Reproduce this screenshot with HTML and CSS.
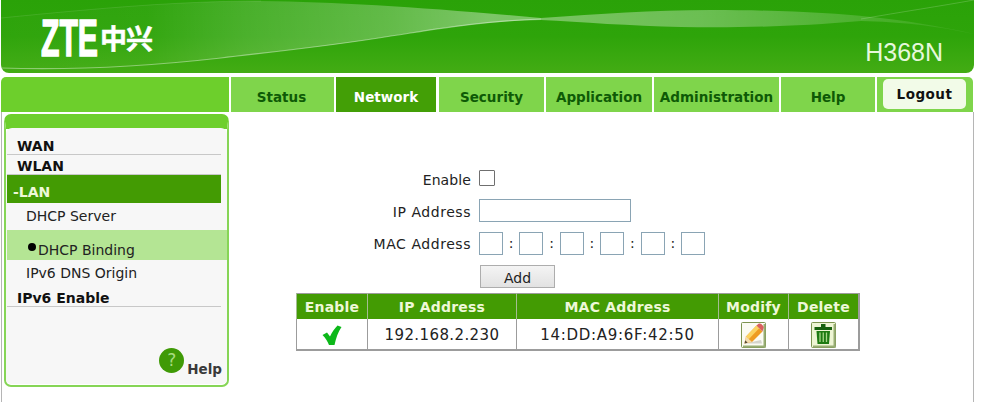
FILE: index.html
```html
<!DOCTYPE html>
<html lang="en">
<head>
    <meta charset="UTF-8">
    <title>H368N</title>
    <link rel="stylesheet" href="styles.css">
</head>
<body>
    <div class="page">
        <div class="header">
            <svg class="waves" viewBox="0 0 973 73" preserveAspectRatio="none">
                <defs>
                    <linearGradient id="sheen" x1="0" x2="973" y1="0" y2="0" gradientUnits="userSpaceOnUse">
                        <stop offset="0" stop-color="#fff" stop-opacity="0.01"/>
                        <stop offset="0.15" stop-color="#fff" stop-opacity="0.03"/>
                        <stop offset="0.25" stop-color="#fff" stop-opacity="0.14"/>
                        <stop offset="0.4" stop-color="#fff" stop-opacity="0.26"/>
                        <stop offset="0.5" stop-color="#fff" stop-opacity="0.38"/>
                        <stop offset="0.72" stop-color="#fff" stop-opacity="0.3"/>
                        <stop offset="1" stop-color="#fff" stop-opacity="0.05"/>
                    </linearGradient>
                </defs>
                <path d="M0 18 C100 8 180 1 260 1 C340 2 430 8 540 18 C600 14 650 10 710 10 C780 10 830 13 870 17 C900 20 940 26 973 34 C930 25 900 22 860 21 C790 27 730 28 680 27 C630 26 580 22 540 20 C480 21 430 30 390 36 C330 46 270 52 220 58 C140 67 60 69 0 68 Z" fill="url(#sheen)"/>
                <path d="M0 68 C60 70 140 67 220 58 C270 52 330 46 390 36 C430 30 480 21 540 19" fill="none" stroke="#fff" stroke-opacity="0.4" stroke-width="1.2"/>
                <path d="M0 18 C100 8 180 1 260 1" fill="none" stroke="#fff" stroke-opacity="0.1" stroke-width="1"/>
                <path d="M860 19 C900 12 940 6 973 0" fill="none" stroke="#fff" stroke-opacity="0.18" stroke-width="1"/>
            </svg>
            <div class="logo"><span class="logo-zte">ZTE</span><span class="logo-cn">中兴</span></div>
            <div class="model">H368N</div>
        </div>

        <div class="nav">
            <div class="nav-blank"></div>
            <a class="tab tab-status">Status</a>
            <a class="tab tab-network active">Network</a>
            <a class="tab tab-security">Security</a>
            <a class="tab tab-application">Application</a>
            <a class="tab tab-admin">Administration</a>
            <a class="tab tab-help">Help</a>
            <div class="tab tab-logout"><button class="logout">Logout</button></div>
        </div>

        <div class="main">
            <div class="sidebar">
                <div class="side-inner">
                    <div class="menu-title">WAN</div>
                    <div class="menu-title wlan">WLAN</div>
                    <div class="menu-open">-LAN</div>
                    <div class="menu-sub">DHCP Server</div>
                    <div class="menu-sub current"><span class="dot"></span>DHCP Binding</div>
                    <div class="menu-sub origin">IPv6 DNS Origin</div>
                    <div class="menu-title ipv6">IPv6 Enable</div>
                    <div class="side-help">
                        <span class="help-icon">?</span>
                        <span class="help-text">Help</span>
                    </div>
                </div>
            </div>

            <div class="content">
                <div class="form">
                    <label class="row-enable">Enable</label>
                    <div class="row-enable"><span class="check"></span></div>
                    <label class="row-ip">IP Address</label>
                    <div class="row-ip"><span class="field ip"></span></div>
                    <label class="row-mac">MAC Address</label>
                    <div class="row-mac mac">
                        <span class="field octet"></span><b>:</b>
                        <span class="field octet"></span><b>:</b>
                        <span class="field octet"></span><b>:</b>
                        <span class="field octet"></span><b>:</b>
                        <span class="field octet"></span><b>:</b>
                        <span class="field octet"></span>
                    </div>
                    <span></span>
                    <div><button class="add">Add</button></div>
                </div>

                <table class="list">
                    <tr>
                        <th class="c1">Enable</th>
                        <th class="c2">IP Address</th>
                        <th class="c3">MAC Address</th>
                        <th class="c4">Modify</th>
                        <th class="c5">Delete</th>
                    </tr>
                    <tr>
                        <td>
                            <svg class="tick" width="20" height="20" viewBox="0 0 20 20"><path d="M0.5 10 L5 7.5 L8 11.5 C10 7 13 3 15.5 0.5 L19.5 2 C16 7 14 13 12.5 20 L7 20 C5.5 16 3.5 13 0.5 10 Z" fill="#0db81a"/></svg>
                        </td>
                        <td>192.168.2.230</td>
                        <td class="mac-cell">14:DD:A9:6F:42:50</td>
                        <td>
                            <svg class="act" width="25" height="26" viewBox="0 0 25 26">
                                <rect x="0.5" y="0.5" width="24" height="25" rx="1" fill="#fbfbf3" stroke="#7d9450"/>
                                <rect x="22.5" y="2" width="2" height="23.5" fill="#98ad74"/>
                                <rect x="2" y="23.5" width="22.5" height="2" fill="#98ad74"/>
                                <path d="M4 21.5 L20 18 L21 21.5 Z" fill="#d4d4cc"/>
                                <path d="M3.5 21.5 L5 14.5 L15.5 3.5 L21.5 9.5 L11 20 Z" fill="#ee9c22"/>
                                <path d="M5 14.5 L15.5 3.5 L18.2 6.2 L7.7 17.2 Z" fill="#fbd261"/>
                                <path d="M15.5 3.5 L17.5 1.8 C18.6 1.2 19.8 1.5 20.6 2.3 L22.2 4 C23 5 22.8 6.2 22.2 7 L21.5 9.5 Z" fill="#d9605f"/>
                                <path d="M3.5 21.5 L5 14.5 L11 20 Z" fill="#f3dcae"/>
                                <path d="M3.5 21.5 L4.2 18.3 L6.7 20.7 Z" fill="#5a4a38"/>
                            </svg>
                        </td>
                        <td>
                            <svg class="act" width="25" height="26" viewBox="0 0 25 26">
                                <rect x="0.5" y="0.5" width="24" height="25" rx="1" fill="#eef5d4" stroke="#7d9450"/>
                                <rect x="22.5" y="2" width="2" height="23.5" fill="#98ad74"/>
                                <rect x="2" y="23.5" width="22.5" height="2" fill="#98ad74"/>
                                <rect x="10" y="2" width="4.5" height="3" fill="#17600e"/>
                                <rect x="3.5" y="5" width="17.5" height="3" fill="#17600e"/>
                                <path d="M5.5 9 H19 L18 22 H6.5 Z" fill="#1e7a12"/>
                                <path d="M9 10.5 V20 M12.25 10.5 V20 M15.5 10.5 V20" stroke="#a8d68a" stroke-width="1.3"/>
                            </svg>
                        </td>
                    </tr>
                </table>
            </div>
        </div>
    </div>
</body>
</html>
```

FILE: styles.css
```css
html, body {
    margin: 0;
    height: 402px;
    overflow: hidden;
    background-color: #ffffff;
}
body {
    font-family: "DejaVu Sans", Verdana, sans-serif;
    font-size: 14px;
    color: #222222;
}
.page {
    width: 973px;
    margin-left: 1px;
}

/* header */
.header {
    position: relative;
    height: 73px;
    border-radius: 0 0 8px 8px;
    background: linear-gradient(#2aa208, #2ea40a 50%, #43ac14);
    overflow: hidden;
    display: flex;
    justify-content: space-between;
}
.waves {
    position: absolute;
    left: 0;
    top: 0;
    width: 100%;
    height: 100%;
}
.logo {
    position: relative;
    display: flex;
    align-items: center;
    height: 40px;
    margin: 18px 0 0 40px;
    color: #ffffff;
}
.logo-zte {
    font-family: "Liberation Sans", Arial, sans-serif;
    font-weight: bold;
    font-size: 52px;
    line-height: 40px;
    width: 59px;
    transform: scaleX(0.58);
    transform-origin: left center;
    -webkit-text-stroke: 1.5px #ffffff;
}
.logo-cn {
    font-family: "Noto Sans CJK SC", sans-serif;
    font-weight: bold;
    font-size: 27px;
    line-height: 40px;
    letter-spacing: -1px;
    -webkit-text-stroke: 0.5px #ffffff;
}
.model {
    position: relative;
    font-family: "Liberation Sans", Arial, sans-serif;
    font-size: 25px;
    line-height: 29px;
    color: #e6f8dc;
    margin: 38px 31px 0 0;
}

/* tab bar */
.nav {
    display: flex;
    gap: 2px;
    height: 35px;
    margin-top: 4px;
}
.nav-blank {
    width: 228px;
    background-color: #6dcf2c;
    border-radius: 5px 0 0 0;
}
.tab {
    display: flex;
    align-items: center;
    justify-content: center;
    box-sizing: border-box;
    padding-top: 4px;
    background-color: #7fd54b;
    color: #0e5a06;
    font-weight: bold;
    font-size: 13.5px;
}
.tab-status { width: 103px; padding-right: 2px; }
.tab-network { width: 100px; margin-right: 1px; }
.tab-security { width: 105px; }
.tab-application { width: 106px; }
.tab-admin { width: 125px; }
.tab-help { width: 94px; }
.tab-logout {
    width: 96px;
    padding-top: 0;
    border-radius: 0 5px 0 0;
}
.tab.active {
    background-color: #439f06;
    color: #ffffff;
}
.logout {
    width: 83px;
    height: 30px;
    margin: 0 1px 2px 0;
    border: 0;
    border-radius: 5px;
    background-color: #f2fbe8;
    color: #111111;
    font-family: inherit;
    font-weight: bold;
    font-size: 13.5px;
    letter-spacing: 0.5px;
    padding: 0;
}

/* main area */
.main {
    display: flex;
    height: 290px;
    border-left: 1px solid #b5b5b5;
    border-right: 1px solid #b5b5b5;
}

/* left menu */
.sidebar {
    width: 225px;
    height: 273px;
    margin: 2px 0 0 2px;
    box-sizing: border-box;
    border: 2px solid #86d556;
    border-top: 15px solid #6dcf2c;
    border-radius: 7px;
    flex-shrink: 0;
}
.side-inner {
    position: relative;
    height: 100%;
    margin-top: -1px;
    background-color: #f7f7f7;
    border-radius: 6px 6px 5px 5px;
    padding: 3px 0 0 1px;
    box-sizing: border-box;
}
.menu-title {
    height: 24px;
    margin-right: 6px;
    padding: 7px 0 0 10px;
    box-sizing: border-box;
    font-weight: bold;
    font-size: 14px;
    line-height: 17px;
    color: #111111;
    border-bottom: 1px solid #c8c8c8;
}
.wlan {
    height: 20px;
    padding-top: 3px;
}
.menu-open {
    height: 28px;
    margin-right: 6px;
    padding-left: 6px;
    background-color: #439b03;
    color: #eef8d8;
    font-weight: bold;
    font-size: 14px;
    line-height: 34px;
}
.menu-sub {
    height: 27px;
    padding-left: 19px;
    font-size: 14px;
    line-height: 26px;
    color: #222222;
}
.menu-sub.current {
    display: flex;
    align-items: flex-end;
    height: 30px;
    padding-left: 21px;
    background-color: #b4e594;
    line-height: 20px;
}
.dot {
    width: 8px;
    height: 8px;
    margin: 0 2px 9px 0;
    border-radius: 50%;
    background-color: #000000;
}
.origin {
    line-height: 26px;
    height: 26px;
}
.ipv6 {
    height: 21px;
    padding-top: 4px;
}
.side-help {
    position: absolute;
    right: 5px;
    bottom: 6px;
    display: flex;
    align-items: flex-end;
    gap: 3px;
}
.help-icon {
    width: 25px;
    height: 25px;
    margin-bottom: 5px;
    border-radius: 50%;
    background-color: #3f9a06;
    color: #a8dc80;
    font-size: 17px;
    line-height: 25px;
    text-align: center;
}
.help-text {
    font-weight: bold;
    font-size: 13.5px;
    line-height: 17px;
    color: #3a3a3a;
}

/* form */
.content {
    flex: 1;
    padding-top: 58px;
}
.form {
    display: grid;
    grid-template-columns: 242px auto;
    column-gap: 8px;
    row-gap: 0;
}
.form label {
    text-align: right;
    color: #222222;
    font-size: 14px;
    line-height: 17px;
    letter-spacing: 0.55px;
}
.form label.row-enable { height: 29px; padding-top: 2px; box-sizing: border-box; letter-spacing: 0.1px; }
.form label.row-ip { height: 33px; padding-top: 5px; box-sizing: border-box; }
.form label.row-mac { height: 33px; padding-top: 4px; box-sizing: border-box; }
.form div.row-enable { height: 29px; }
.form div.row-ip { height: 33px; }
.form div.row-mac { height: 33px; }
.check {
    display: block;
    width: 16px;
    height: 16px;
    box-sizing: border-box;
    border: 1px solid #6f6f6f;
    border-radius: 1px;
    background-color: #ffffff;
}
.field {
    display: block;
    box-sizing: border-box;
    height: 23px;
    border: 1px solid #8aa4b4;
    background-color: #ffffff;
}
.ip {
    width: 152px;
}
.mac {
    display: flex;
    align-items: flex-start;
}
.octet {
    width: 24px;
}
.mac b {
    width: 16.4px;
    font-weight: normal;
    font-size: 14px;
    line-height: 22px;
    text-align: center;
    color: #222222;
}
.add {
    display: block;
    width: 75px;
    height: 23px;
    margin-left: 1px;
    padding: 3px 0 0;
    border: 1px solid #adadad;
    background: linear-gradient(#f4f4f4, #e2e2e2);
    color: #222222;
    font-family: inherit;
    font-size: 14px;
    line-height: 18px;
}

/* binding list */
.list {
    width: 562px;
    margin: 5px 0 0 67px;
    border-collapse: collapse;
    table-layout: fixed;
    border: 2px solid #9c9c9c;
    border-top-width: 1px;
    border-right-width: 2px;
    border-left-width: 1px;
}
.list th {
    height: 25px;
    padding: 0;
    background-color: #439b03;
    color: #eef8d8;
    font-size: 14px;
    font-weight: bold;
    letter-spacing: 0.2px;
    border-left: 1px solid #a4bd92;
}
.list td {
    height: 31px;
    padding: 2px 0 0;
    box-sizing: border-box;
    text-align: center;
    font-size: 15px;
    color: #222222;
    letter-spacing: 0.4px;
    border-left: 1px solid #9c9c9c;
    background-color: #ffffff;
}
.list td.mac-cell {
    letter-spacing: 0.7px;
}
.list svg {
    display: block;
    margin: -1px auto 0;
}
.c1 { width: 70px; }
.c2 { width: 148px; }
.c3 { width: 201px; }
.c4 { width: 69px; }
.c5 { width: 69px; }
```
